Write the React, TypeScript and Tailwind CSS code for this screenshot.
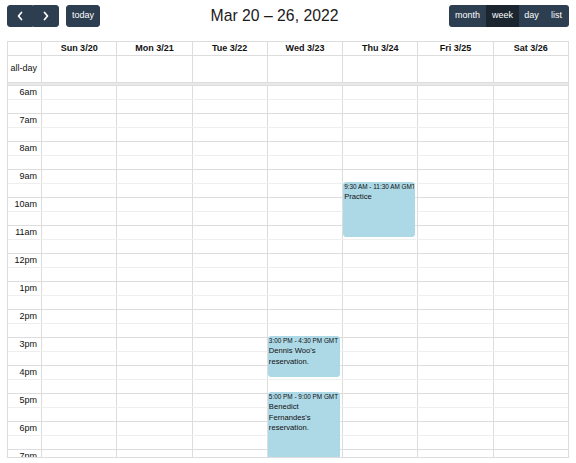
import React from "react";

const HOUR = 28;
const START = 6;
const days = ["Sun 3/20", "Mon 3/21", "Tue 3/22", "Wed 3/23", "Thu 3/24", "Fri 3/25", "Sat 3/26"];
const hourLabels = ["6am", "7am", "8am", "9am", "10am", "11am", "12pm", "1pm", "2pm", "3pm", "4pm", "5pm", "6pm", "7pm", "8pm", "9pm"];

const events = [
  { day: 4, start: 9.5, end: 11.5, time: "9:30 AM - 11:30 AM GMT", title: "Practice" },
  { day: 3, start: 15, end: 16.5, time: "3:00 PM - 4:30 PM GMT", title: "Dennis Woo's reservation." },
  { day: 3, start: 17, end: 21, time: "5:00 PM - 9:00 PM GMT", title: "Benedict Fernandes's reservation." },
];

function Chevron({ dir }: { dir: "left" | "right" }) {
  return (
    <svg viewBox="0 0 6 10" className="w-[6px] h-[10px]" fill="none" stroke="white" strokeWidth={1.7} strokeLinecap="round" strokeLinejoin="round">
      {dir === "left" ? <path d="M4.5 1.5 L1.5 5 L4.5 8.5" /> : <path d="M1.5 1.5 L4.5 5 L1.5 8.5" />}
    </svg>
  );
}

export default function App() {
  const rows: { label: string | null; minor: boolean }[] = [];
  hourLabels.forEach((h) => {
    rows.push({ label: h, minor: false });
    rows.push({ label: null, minor: true });
  });

  return (
    <div className="w-[576px] h-[463px] bg-white overflow-hidden font-['Liberation_Sans',Arial,sans-serif] text-[9px] text-[#111]">
      <div className="px-[7px] pt-[5px]">
        {/* toolbar */}
        <div className="flex items-center justify-between h-[22px]">
          <div className="flex items-center gap-[7px] h-full">
            <div className="flex h-full">
              <button className="w-[26px] h-full flex items-center justify-center bg-[#2c3e50] rounded-l-[3px] border border-[#2c3e50]">
                <Chevron dir="left" />
              </button>
              <button className="w-[26px] h-full flex items-center justify-center bg-[#2c3e50] rounded-r-[3px] border border-[#2c3e50]">
                <Chevron dir="right" />
              </button>
            </div>
            <button className="w-[34px] h-full flex items-center justify-center bg-[#2c3e50] rounded-[3px] text-white text-[9px] border border-[#2c3e50]">
              today
            </button>
          </div>
          <h2 className="text-[15.75px] font-normal text-[#1a1a1a] leading-none">Mar 20 – 26, 2022</h2>
          <div className="flex h-full text-white text-[9px]">
            <button className="w-[37px] h-full flex items-center justify-center bg-[#2c3e50] rounded-l-[3px]">month</button>
            <button className="w-[33px] h-full flex items-center justify-center bg-[#1a252f]">week</button>
            <button className="w-[25px] h-full flex items-center justify-center bg-[#2c3e50]">day</button>
            <button className="w-[25px] h-full flex items-center justify-center bg-[#2c3e50] rounded-r-[3px]">list</button>
          </div>
        </div>

        {/* calendar */}
        <div className="mt-[14px] h-[417px] w-[562px] border border-[#ddd] flex flex-col">
          <div className="grid grid-cols-[33px_repeat(7,minmax(0,1fr))] h-[14px] border-b border-[#ddd] shrink-0">
            <div />
            {days.map((d) => (
              <div key={d} className="border-l border-[#ddd] flex items-center justify-center font-bold text-[9px] leading-none">
                {d}
              </div>
            ))}
          </div>
          <div className="grid grid-cols-[33px_repeat(7,minmax(0,1fr))] h-[27px] border-b border-[#ddd] shrink-0">
            <div className="flex items-center justify-end pr-[4px]">all-day</div>
            {days.map((d) => (
              <div key={d} className="border-l border-[#ddd]" />
            ))}
          </div>
          <div className="h-[2px] bg-[#e9e9e9] shrink-0" />
          <div className="relative flex-1 overflow-hidden">
            {rows.map((r, i) => (
              <div
                key={i}
                className={
                  "grid grid-cols-[33px_repeat(7,minmax(0,1fr))] h-[14px] border-t " +
                  (r.minor ? "border-[#eeeeee]" : "border-[#dddddd]")
                }
              >
                <div className="flex items-center justify-end pr-[4px] leading-none">{r.label}</div>
                {days.map((d) => (
                  <div key={d} className="border-l border-[#ddd]" />
                ))}
              </div>
            ))}
            <div className="absolute inset-0 grid grid-cols-[33px_repeat(7,minmax(0,1fr))]">
              <div />
              {days.map((d, di) => (
                <div key={d} className="relative">
                  {events
                    .filter((e) => e.day === di)
                    .map((e) => (
                      <div
                        key={e.time}
                        className="absolute left-[1px] right-[2px] bg-[#add8e6] border border-[#add8e6] rounded-[3px] overflow-hidden text-[#111]"
                        style={{ top: (e.start - START) * HOUR - 1, height: (e.end - e.start) * HOUR - 1 }}
                      >
                        <div className="text-[6.4px] leading-[8px] whitespace-nowrap overflow-hidden">{e.time}</div>
                        <div className="text-[7.65px] leading-[10.5px] mt-[1px]">{e.title}</div>
                      </div>
                    ))}
                </div>
              ))}
            </div>
          </div>
        </div>
      </div>
    </div>
  );
}
